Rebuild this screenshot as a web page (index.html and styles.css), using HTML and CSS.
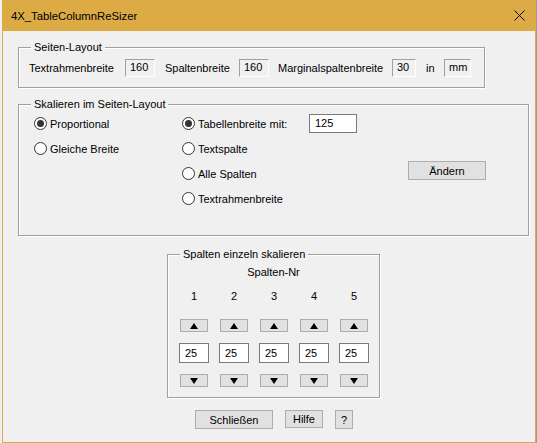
FILE: index.html
```html
<!DOCTYPE html>
<html lang="de">
<head>
<meta charset="utf-8">
<title>4X_TableColumnReSizer</title>
<link rel="stylesheet" href="styles.css">
</head>
<body>
<div class="window">
  <div class="titlebar">
    <span class="title">4X_TableColumnReSizer</span>
    <svg class="close" width="11" height="11" viewBox="0 0 11 11"><path d="M0.5 0.5 L10.5 10.5 M10.5 0.5 L0.5 10.5" stroke="#000" stroke-width="1" fill="none"/></svg>
  </div>
  <div class="client">
    <section class="group g1">
      <div class="legend">Seiten-Layout</div>
      <div class="layout-row">
        <span>Textrahmenbreite</span>
        <span class="static w30">160</span>
        <span>Spaltenbreite</span>
        <span class="static w30">160</span>
        <span>Marginalspaltenbreite</span>
        <span class="static w24">30</span>
        <span>in</span>
        <span class="static w27">mm</span>
      </div>
    </section>

    <section class="group g2">
      <div class="legend">Skalieren im Seiten-Layout</div>
      <div class="scale-grid">
        <label class="radio r1c1"><span class="dot checked"></span>Proportional</label>
        <label class="radio r2c1"><span class="dot"></span>Gleiche Breite</label>
        <label class="radio r1c2"><span class="dot checked"></span>Tabellenbreite mit:</label>
        <label class="radio r2c2"><span class="dot"></span>Textspalte</label>
        <label class="radio r3c2"><span class="dot"></span>Alle Spalten</label>
        <label class="radio r4c2"><span class="dot"></span>Textrahmenbreite</label>
        <span class="edit w48 r1c3">125</span>
        <button class="btn change">Ändern</button>
      </div>
    </section>

    <section class="group g3">
      <div class="legend">Spalten einzeln skalieren</div>
      <div class="colhead">Spalten-Nr</div>
      <div class="cols">
        <div class="col"><span class="num">1</span><button class="btn arrow"><svg width="8" height="6" viewBox="0 0 8 6"><polygon points="4,0 8,6 0,6" fill="#000"/></svg></button><span class="edit w30">25</span><button class="btn arrow down"><svg width="8" height="6" viewBox="0 0 8 6"><polygon points="0,0 8,0 4,6" fill="#000"/></svg></button></div>
        <div class="col"><span class="num">2</span><button class="btn arrow"><svg width="8" height="6" viewBox="0 0 8 6"><polygon points="4,0 8,6 0,6" fill="#000"/></svg></button><span class="edit w30">25</span><button class="btn arrow down"><svg width="8" height="6" viewBox="0 0 8 6"><polygon points="0,0 8,0 4,6" fill="#000"/></svg></button></div>
        <div class="col"><span class="num">3</span><button class="btn arrow"><svg width="8" height="6" viewBox="0 0 8 6"><polygon points="4,0 8,6 0,6" fill="#000"/></svg></button><span class="edit w30">25</span><button class="btn arrow down"><svg width="8" height="6" viewBox="0 0 8 6"><polygon points="0,0 8,0 4,6" fill="#000"/></svg></button></div>
        <div class="col"><span class="num">4</span><button class="btn arrow"><svg width="8" height="6" viewBox="0 0 8 6"><polygon points="4,0 8,6 0,6" fill="#000"/></svg></button><span class="edit w30">25</span><button class="btn arrow down"><svg width="8" height="6" viewBox="0 0 8 6"><polygon points="0,0 8,0 4,6" fill="#000"/></svg></button></div>
        <div class="col"><span class="num">5</span><button class="btn arrow"><svg width="8" height="6" viewBox="0 0 8 6"><polygon points="4,0 8,6 0,6" fill="#000"/></svg></button><span class="edit w30">25</span><button class="btn arrow down"><svg width="8" height="6" viewBox="0 0 8 6"><polygon points="0,0 8,0 4,6" fill="#000"/></svg></button></div>
      </div>
    </section>

    <div class="footer">
      <button class="btn close-btn">Schließen</button>
      <button class="btn help">Hilfe</button>
      <button class="btn q">?</button>
    </div>
  </div>
</div>
</body>
</html>
```

FILE: styles.css
```css
* { box-sizing: border-box; }

body {
  margin: 0;
  background: #f0f0f0;
  font-family: "Liberation Sans", Arial, sans-serif;
  font-size: 11px;
  color: #000;
}

.window {
  margin-left: 2px;
  width: 534px;
  height: 443px;
  border: 1px solid #dcab45;
  border-top: 0;
  background: #f0f0f0;
  box-shadow: 1px 0 0 #9a9a9a;
  display: flex;
  flex-direction: column;
}

.titlebar {
  height: 31px;
  flex: none;
  background: #dcab45;
  display: flex;
  align-items: center;
  padding-left: 8px;
  padding-right: 10px;
}

.title {
  flex: 1;
  font-size: 11.3px;
  padding-top: 1px;
}

.close {
  display: block;
}

.client {
  padding-left: 15px;
}

.group {
  border: 1px solid #a0a0a0;
  box-shadow: inset 1px 1px 0 #fff, 1px 1px 0 #fff;
}

.legend {
  width: fit-content;
  height: 14px;
  line-height: 14px;
  margin: -8px 0 0 12px;
  padding: 0 3px;
  background: #f0f0f0;
}

.g1 {
  width: 467px;
  margin-top: 16px;
  padding-bottom: 10px;
}

.layout-row {
  margin-top: 5px;
  margin-left: 10px;
  display: grid;
  grid-template-columns: 96px 40px 74px 39px 114px 34px 18px 27px;
  align-items: center;
  height: 18px;
}

.static {
  height: 18px;
  line-height: 15px;
  padding-left: 4px;
  border-top: 1px solid #a0a0a0;
  border-left: 1px solid #a0a0a0;
  border-right: 1px solid #fff;
  border-bottom: 1px solid #fff;
}

.w30 { width: 30px; }
.w24 { width: 24px; }
.w27 { width: 27px; }
.w48 { width: 48px; }

.g2 {
  width: 511px;
  margin-top: 16px;
  padding-bottom: 24px;
}

.scale-grid {
  padding-left: 15px;
  display: grid;
  grid-template-columns: 148px 127px 99px 1fr;
  grid-template-rows: repeat(4, 25px);
  align-items: center;
}

.radio {
  display: flex;
  align-items: center;
  gap: 3px;
  white-space: nowrap;
}

.dot {
  width: 13px;
  height: 13px;
  border: 1px solid #333;
  border-radius: 50%;
  background: #fff;
  display: flex;
  align-items: center;
  justify-content: center;
  flex: none;
}

.dot.checked::after {
  content: "";
  width: 7px;
  height: 7px;
  border-radius: 50%;
  background: #333;
}

.r1c1 { grid-row: 1; grid-column: 1; }
.r2c1 { grid-row: 2; grid-column: 1; }
.r1c2 { grid-row: 1; grid-column: 2; }
.r2c2 { grid-row: 2; grid-column: 2; }
.r3c2 { grid-row: 3; grid-column: 2; }
.r4c2 { grid-row: 4; grid-column: 2; }
.r1c3 { grid-row: 1; grid-column: 3; }

.edit {
  display: block;
  height: 19px;
  line-height: 17px;
  padding-left: 5px;
  background: #fff;
  border: 1px solid #7a7a7a;
}

.btn {
  font: inherit;
  color: #000;
  background: #e1e1e1;
  border: 1px solid #adadad;
  padding: 0;
  margin: 0;
  display: flex;
  align-items: center;
  justify-content: center;
}

.change {
  grid-row: 3;
  grid-column: 4;
  align-self: start;
  width: 78px;
  height: 19px;
}

.g3 {
  width: 213px;
  margin-top: 18px;
  margin-left: 149px;
  padding-bottom: 10px;
}

.colhead {
  text-align: center;
  line-height: 14px;
  margin-top: 4px;
}

.cols {
  display: flex;
  padding-left: 6px;
  margin-top: 10px;
}

.col {
  width: 40px;
  display: flex;
  flex-direction: column;
  align-items: center;
}

.num {
  line-height: 14px;
}

.arrow {
  width: 28px;
  height: 13px;
  margin-top: 16px;
}

.arrow.down {
  margin-top: 11px;
}

.col .edit {
  margin-top: 11px;
  height: 20px;
  line-height: 18px;
  padding-left: 5px;
}

.footer {
  display: flex;
  gap: 12px;
  margin-top: 12px;
  margin-left: 177px;
  align-items: flex-start;
}

.close-btn { width: 78px; height: 19px; }
.help { width: 38px; height: 18px; }
.q { width: 18px; height: 19px; }
```
